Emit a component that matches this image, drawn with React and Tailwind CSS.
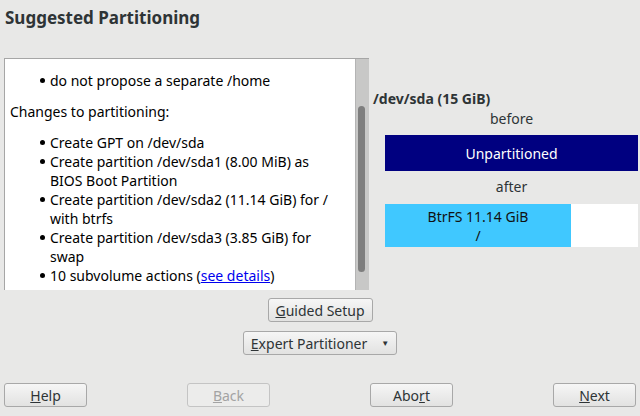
const font = { fontFamily: '"Noto Sans", "Open Sans", sans-serif' };

const Btn = ({ children, className = '', disabled = false }) => (
  <div
    className={`flex items-center justify-center h-[24px] rounded-[3px] border text-[14px] ${
      disabled
        ? 'border-[#c4c4c4] bg-[#ececeb] text-[#a3a3a3]'
        : 'border-[#a8a8a8] bg-gradient-to-b from-[#f6f6f6] to-[#e2e2e1] text-[#2e3436]'
    } ${className}`}
  >
    {children}
  </div>
);

const Bullet = ({ children }) => (
  <div className="flex pl-[35px]">
    <span className="w-[10px] shrink-0 flex items-start pt-[7px]">
      <span className="block w-[5px] h-[5px] rounded-full bg-black" />
    </span>
    <span className="whitespace-nowrap">{children}</span>
  </div>
);

export default function App() {
  return (
    <div
      className="w-[640px] h-[416px] bg-[#e8e8e7] text-[#000] overflow-hidden flex flex-col"
      style={font}
    >
      <h1 className="pl-[5px] pt-[7px] h-[58px] text-[17px] font-bold text-[#2e3436] leading-[22px]">
        Suggested Partitioning
      </h1>

      <div className="flex">
        <div className="ml-[4px] w-[365px] h-[232px] border-t border-l border-[#a6a6a6] bg-white flex">
          <div className="flex-1 pt-[12px] text-[14px] leading-[19px] overflow-hidden">
            <Bullet>do not propose a separate /home</Bullet>
            <div className="pl-[5px] mt-[12px]">Changes to partitioning:</div>
            <div className="mt-[12px]">
              <Bullet>Create GPT on /dev/sda</Bullet>
              <Bullet>
                Create partition /dev/sda1 (8.00 MiB) as
                <br />
                BIOS Boot Partition
              </Bullet>
              <Bullet>
                Create partition /dev/sda2 (11.14 GiB) for /
                <br />
                with btrfs
              </Bullet>
              <Bullet>
                Create partition /dev/sda3 (3.85 GiB) for
                <br />
                swap
              </Bullet>
              <Bullet>
                10 subvolume actions (
                <span className="text-[#0000ee] underline">see details</span>)
              </Bullet>
            </div>
          </div>
          <div className="w-[14px] h-full bg-[#c8c8c7] border-l border-[#b4b4b4] pt-[47px]">
            <div className="ml-[2px] w-[7px] h-[166px] rounded-full bg-[#7e7e7e]" />
          </div>
        </div>

        <div className="flex-1 ml-[4px] text-[14px]">
          <div className="pt-[31px] font-bold leading-[20px] text-[#2e3436]">/dev/sda (15 GiB)</div>
          <div className="pl-[12px] pr-[2px]">
            <div className="text-center leading-[20px] text-[#2e3436] h-[26px]">before</div>
            <div className="h-[36px] bg-[#000080] text-white flex items-center justify-center">
              Unpartitioned
            </div>
            <div className="text-center leading-[20px] text-[#2e3436] h-[33px] pt-[6px]">after</div>
            <div className="h-[43px] flex bg-white">
              <div className="w-[186px] bg-[#40c8ff] flex flex-col items-center justify-center leading-[19px] text-[#111]">
                <span>BtrFS 11.14 GiB</span>
                <span>/</span>
              </div>
            </div>
          </div>
        </div>
      </div>

      <div className="flex flex-col items-center mt-[8px] gap-[9px]">
        <Btn className="w-[105px]">
          <span>
            <span className="underline">G</span>uided Setup
          </span>
        </Btn>
        <Btn className="w-[154px]">
          <span>
            <span className="underline">E</span>xpert Partitioner
          </span>
          <span className="ml-[14px] text-[8px]">▼</span>
        </Btn>
      </div>

      <div className="flex justify-between px-[4px] mt-[28px]">
        <Btn className="w-[83px]">
          <span>
            <span className="underline">H</span>elp
          </span>
        </Btn>
        <Btn className="w-[83px]" disabled>
          <span>
            <span className="underline">B</span>ack
          </span>
        </Btn>
        <Btn className="w-[83px]">
          <span>
            Abo<span className="underline">r</span>t
          </span>
        </Btn>
        <Btn className="w-[83px]">
          <span>
            <span className="underline">N</span>ext
          </span>
        </Btn>
      </div>
    </div>
  );
}
